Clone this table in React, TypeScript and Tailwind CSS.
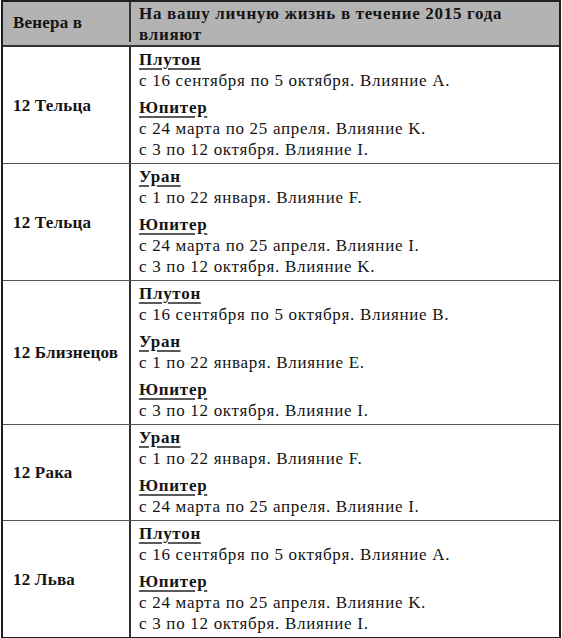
const rows: { sign: string; items: { planet: string; lines: string[] }[] }[] = [
  {
    sign: '12 Тельца',
    items: [
      { planet: 'Плутон', lines: ['с 16 сентября по 5 октября. Влияние A.'] },
      { planet: 'Юпитер', lines: ['с 24 марта по 25 апреля. Влияние K.', 'с 3 по 12 октября. Влияние I.'] },
    ],
  },
  {
    sign: '12 Тельца',
    items: [
      { planet: 'Уран', lines: ['с 1 по 22 января. Влияние F.'] },
      { planet: 'Юпитер', lines: ['с 24 марта по 25 апреля. Влияние I.', 'с 3 по 12 октября. Влияние K.'] },
    ],
  },
  {
    sign: '12 Близнецов',
    items: [
      { planet: 'Плутон', lines: ['с 16 сентября по 5 октября. Влияние B.'] },
      { planet: 'Уран', lines: ['с 1 по 22 января. Влияние E.'] },
      { planet: 'Юпитер', lines: ['с 3 по 12 октября. Влияние I.'] },
    ],
  },
  {
    sign: '12 Рака',
    items: [
      { planet: 'Уран', lines: ['с 1 по 22 января. Влияние F.'] },
      { planet: 'Юпитер', lines: ['с 24 марта по 25 апреля. Влияние I.'] },
    ],
  },
  {
    sign: '12 Льва',
    items: [
      { planet: 'Плутон', lines: ['с 16 сентября по 5 октября. Влияние A.'] },
      { planet: 'Юпитер', lines: ['с 24 марта по 25 апреля. Влияние K.', 'с 3 по 12 октября. Влияние I.'] },
    ],
  },
];

export default function App() {
  return (
    <div className="bg-white w-[562px] h-[638px] pl-[1px] text-[#141414] [font-family:'Liberation_Serif',serif] text-[17px] leading-[21px] tracking-[0.7px]">
      <div className="w-[560px] border-2 border-[#1e1e1e]">
        {/* header */}
        <div className="flex bg-[#b3b3b3] border-b-2 border-[#333] font-bold">
          <div className="w-[128px] shrink-0 px-[10px] flex items-center border-r-2 border-[#333] h-[40px] whitespace-nowrap tracking-[0.2px]">
            Венера в
          </div>
          <div className="flex-1 pl-[8px] pr-2 pt-[1px]">
            На вашу личную жизнь в течение 2015 года влияют
          </div>
        </div>
        {rows.map((row, i) => (
          <div
            key={i}
            className={i < rows.length - 1 ? 'flex border-b-[1.5px] border-[#555]' : 'flex'}
          >
            <div className="w-[128px] shrink-0 px-[10px] flex items-center font-bold border-r-2 border-[#333] whitespace-nowrap tracking-[0.2px]">
              {row.sign}
            </div>
            <div className="flex-1 pl-[8px] pr-2 pt-[2px] pb-[3px] flex flex-col gap-[6px]">
              {row.items.map((it, j) => (
                <div key={j}>
                  <div className="font-bold underline decoration-[#5a5a5a] decoration-2 underline-offset-[3px]">
                    {it.planet}
                  </div>
                  {it.lines.map((l, k) => (
                    <div key={k}>{l}</div>
                  ))}
                </div>
              ))}
            </div>
          </div>
        ))}
      </div>
    </div>
  );
}
